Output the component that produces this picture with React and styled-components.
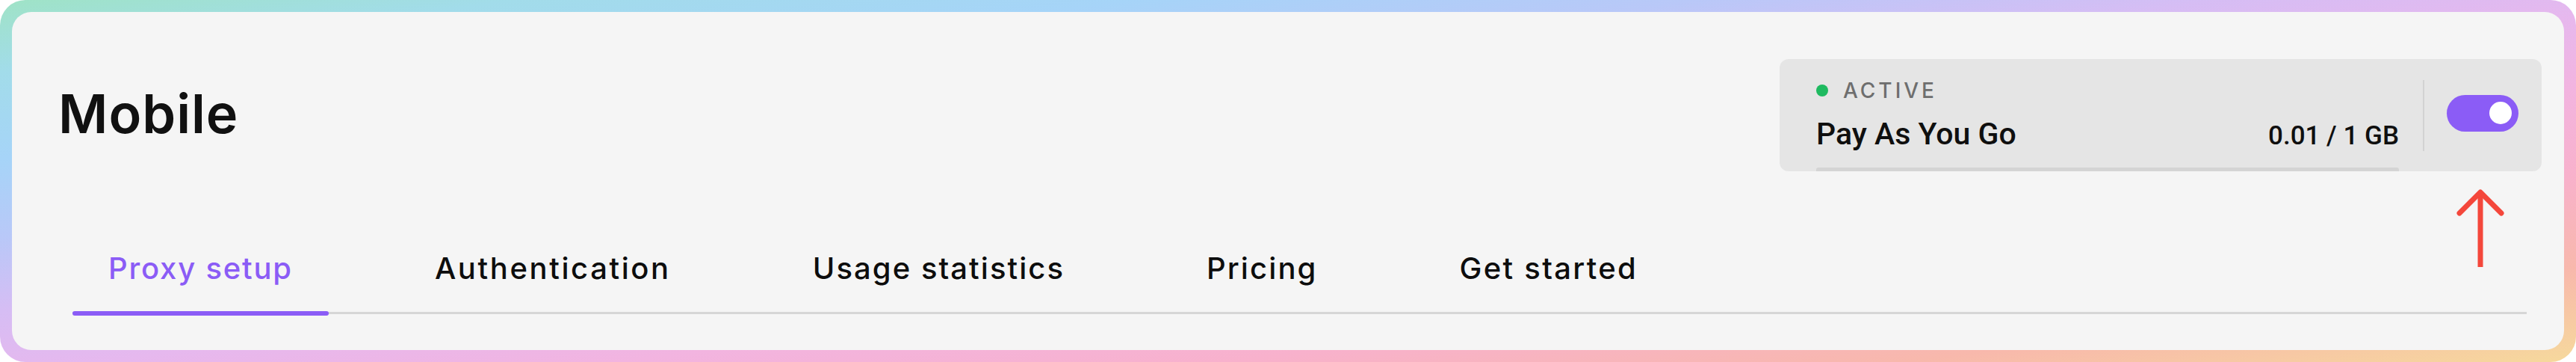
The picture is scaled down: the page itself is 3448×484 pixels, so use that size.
import React from "react";
import styled, { createGlobalStyle } from "styled-components";

const Global = createGlobalStyle`
  html, body {
    margin: 0;
    padding: 0;
    background: #ffffff;
  }
  * { box-sizing: border-box; }
`;

const Frame = styled.div`
  width: 3448px;
  height: 484px;
  padding: 16px;
  border-radius: 34px;
  background: linear-gradient(
    to bottom right,
    #9fe3c6 0%,
    #a2dcea 10%,
    #a6d4f8 22%,
    #b9c8f8 33%,
    #d6bdf4 43%,
    #e6b8ee 52%,
    #f2b4e0 62%,
    #f8b1cc 74%,
    #f8b8ac 87%,
    #f6d99c 100%
  );
`;

const Panel = styled.div`
  height: 100%;
  background: #f5f5f5;
  border-radius: 26px;
  padding: 63px 30px 49px 62px;
  display: flex;
  flex-direction: column;
`;

const Header = styled.div`
  display: flex;
  align-items: center;
  justify-content: space-between;
`;

const Title = styled.h1`
  margin: 0 0 4px 0;
  font-family: Inter, "Liberation Sans", sans-serif;
  font-size: 72px;
  line-height: 1;
  font-weight: 600;
  letter-spacing: 1px;
  color: #111111;
`;

const PlanWrap = styled.div`
  position: relative;
`;

const PlanCard = styled.div`
  width: 1020px;
  height: 150px;
  background: #e5e5e5;
  border-radius: 12px;
  overflow: hidden;
  display: flex;
  align-items: center;
  padding: 0 30px 0 49px;
`;

const PlanInfo = styled.div`
  width: 780px;
  height: 100%;
  padding-top: 28px;
  display: flex;
  flex-direction: column;
`;

const Status = styled.div`
  display: flex;
  align-items: center;
  gap: 20px;
  height: 28px;
  font-family: Inter, "Liberation Sans", sans-serif;
  font-size: 28px;
  line-height: 28px;
  font-weight: 500;
  letter-spacing: 4px;
  color: #6e6e6e;
  text-transform: uppercase;
`;

const Dot = styled.span`
  width: 16px;
  height: 16px;
  border-radius: 50%;
  background: #1fba60;
  flex-shrink: 0;
`;

const PlanRow = styled.div`
  margin-top: 20px;
  display: flex;
  align-items: baseline;
  justify-content: space-between;
  font-family: Roboto, "Liberation Sans", sans-serif;
  color: #0f0f0f;
  line-height: 1.2;
`;

const PlanName = styled.span`
  font-size: 41px;
  font-weight: 500;
`;

const Usage = styled.span`
  font-size: 35px;
  font-weight: 500;
`;

const Track = styled.div`
  margin-top: auto;
  height: 5px;
  border-radius: 3px 3px 0 0;
  background: #d4d4d4;
`;

const Divider = styled.div`
  width: 2px;
  height: 95px;
  margin: 0 30px 0 32px;
  background: #d2d2d2;
  align-self: center;
`;

const Toggle = styled.div`
  width: 96px;
  height: 49px;
  border-radius: 25px;
  background: ${(p) => (p.$on ? "#8b5cf6" : "#c8c8c8")};
  display: flex;
  align-items: center;
  justify-content: ${(p) => (p.$on ? "flex-end" : "flex-start")};
  padding: 0 9px;
  margin-top: -6px;
`;

const Knob = styled.span`
  width: 30px;
  height: 30px;
  border-radius: 50%;
  background: #ffffff;
`;

const Arrow = styled.svg`
  position: absolute;
  left: 906px;
  top: 174px;
`;

const Tabs = styled.nav`
  margin: 106px 20px 0 19px;
  display: flex;
  gap: 94px;
  border-bottom: 3px solid #d6d6d6;
`;

const Tab = styled.div`
  position: relative;
  padding: 0 48px 34px;
  font-family: Inter, "Liberation Sans", sans-serif;
  font-size: 40px;
  line-height: 48px;
  font-weight: 500;
  letter-spacing: ${(p) => p.$ls}px;
  color: ${(p) => (p.$active ? "#8b5cf6" : "#0d0d0d")};
  white-space: nowrap;

  &::after {
    content: "";
    display: ${(p) => (p.$active ? "block" : "none")};
    position: absolute;
    left: 0;
    right: 0;
    bottom: -4.5px;
    height: 6px;
    border-radius: 3px;
    background: #8b5cf6;
  }
`;

const tabs = [
  { label: "Proxy setup", ls: 1.8, active: true },
  { label: "Authentication", ls: 2.6 },
  { label: "Usage statistics", ls: 2.05 },
  { label: "Pricing", ls: 2.1 },
  { label: "Get started", ls: 2.3 },
];

export default function App() {
  return (
    <>
      <Global />
      <Frame>
        <Panel>
          <Header>
            <Title>Mobile</Title>
            <PlanWrap>
              <PlanCard>
                <PlanInfo>
                  <Status>
                    <Dot />
                    Active
                  </Status>
                  <PlanRow>
                    <PlanName>Pay As You Go</PlanName>
                    <Usage>0.01 / 1 GB</Usage>
                  </PlanRow>
                  <Track />
                </PlanInfo>
                <Divider />
                <Toggle $on>
                  <Knob />
                </Toggle>
              </PlanCard>
              <Arrow width="64" height="108" viewBox="0 0 64 108" fill="none">
                <path d="M32 7 V104" stroke="#f4473b" strokeWidth="7" />
                <path
                  d="M4 32 L32 4 L60 32"
                  stroke="#f4473b"
                  strokeWidth="7"
                  strokeLinecap="round"
                  strokeLinejoin="round"
                />
              </Arrow>
            </PlanWrap>
          </Header>
          <Tabs>
            {tabs.map((t) => (
              <Tab key={t.label} $active={t.active} $ls={t.ls}>
                {t.label}
              </Tab>
            ))}
          </Tabs>
        </Panel>
      </Frame>
    </>
  );
}
